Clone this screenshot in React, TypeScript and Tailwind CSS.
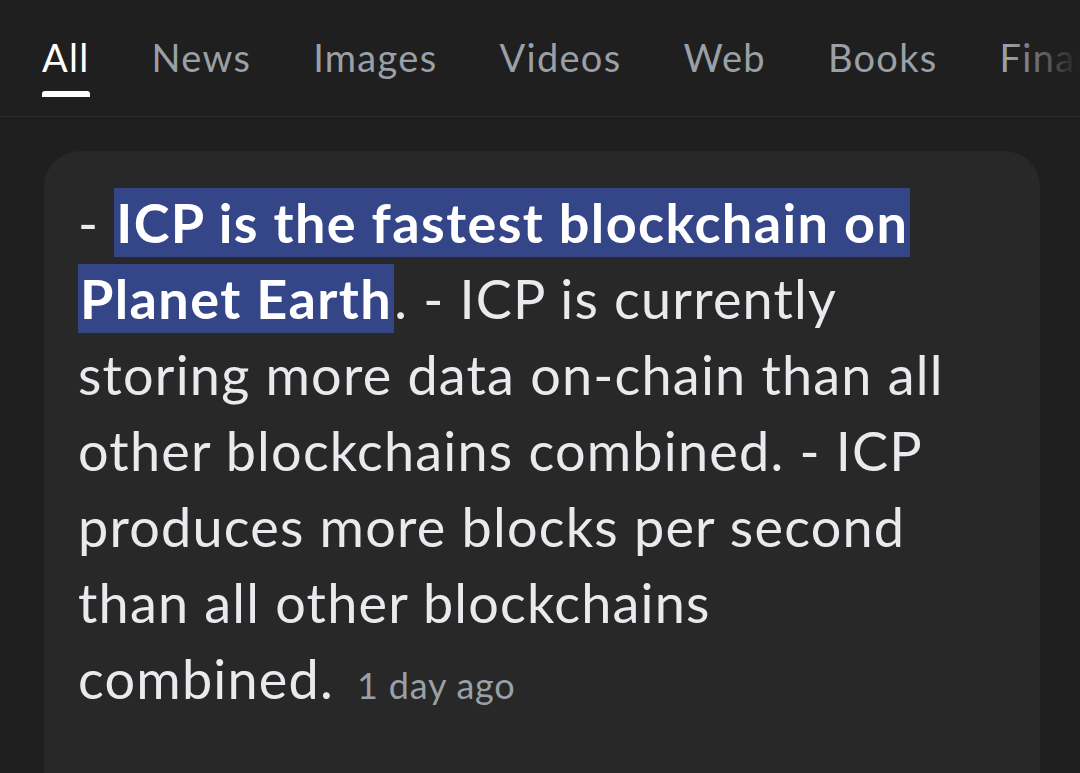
const tabs = ["All", "News", "Images", "Videos", "Web", "Books", "Finance"];

export default function App() {
  return (
    <div
      className="w-[1080px] h-[773px] overflow-hidden bg-[#1f1f1f]"
      style={{ fontFamily: "Lato, 'Open Sans', sans-serif" }}
    >
      {/* Tabs */}
      <div className="relative flex h-[117px] border-b border-[#2c2c2c] pl-[11px] overflow-hidden">
        {tabs.map((t, i) => (
          <div key={t} className="flex flex-col items-center shrink-0 px-[31px] pt-[34px]">
            <span
              className={
                "text-[38px] leading-[46px] tracking-[1.3px] whitespace-nowrap " +
                (i === 0 ? "text-white" : "text-[#9aa0a6]")
              }
            >
              {t}
            </span>
            {i === 0 && <div className="mt-[11px] h-[6px] w-full rounded-t-[3px] bg-white" />}
          </div>
        ))}
        {/* fade on the right */}
        <div className="absolute right-0 top-0 h-full w-[70px] bg-gradient-to-r from-transparent to-[#1f1f1f]" />
      </div>

      {/* Card */}
      <div className="ml-[44px] mr-[40px] mt-[34px] h-[700px] rounded-t-[36px] bg-[#282828] pl-[34px] pr-[50px] pt-[34px]">
        <p className="text-[54px] leading-[76px] tracking-[1.2px] text-[#e8eaed]">
          -{" "}
          <span className="bg-[#344688] font-bold tracking-[1.4px] text-white box-decoration-clone px-[2px] py-[2px]">
            ICP is the fastest blockchain on Planet Earth
          </span>
          . - ICP is currently storing more data on-chain than all other blockchains combined. - ICP
          produces more blocks per second than all other blockchains{" "}
          <span className="whitespace-nowrap">
            combined.{" "}
            <span className="ml-[8px] text-[36px] tracking-[0.8px] text-[#9aa0a6]">1 day ago</span>
          </span>
        </p>
      </div>
    </div>
  );
}
